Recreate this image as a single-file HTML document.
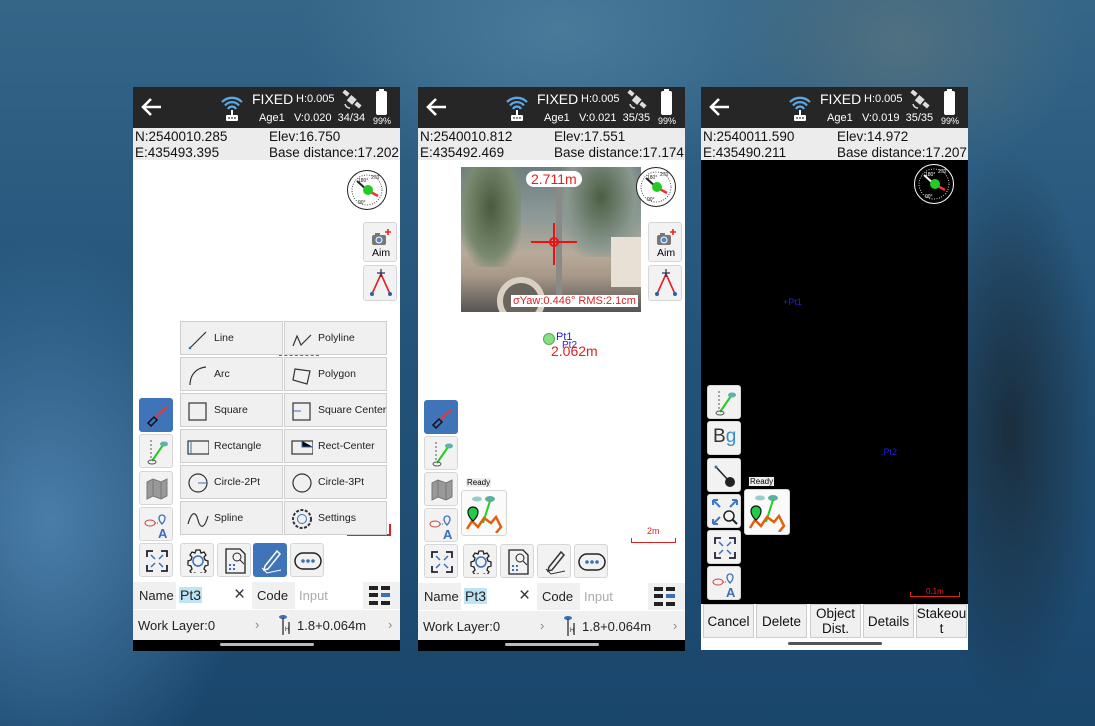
<!DOCTYPE html>
<html><head><meta charset="utf-8"><style>
*{box-sizing:border-box;margin:0;padding:0}
body{width:1095px;height:726px;overflow:hidden;position:relative;font-family:"Liberation Sans",sans-serif;
background:
radial-gradient(ellipse 200px 280px at 50px 520px,#4a7eaa 0%,rgba(60,110,150,0) 100%),
radial-gradient(ellipse 90px 280px at 1010px 430px,#1a2e3e 0%,rgba(30,50,70,0) 100%),
radial-gradient(ellipse 180px 140px at 900px 40px,#50707f 0%,rgba(80,110,130,0) 100%),
radial-gradient(ellipse 260px 160px at 560px 30px,#4a7a9a 0%,rgba(80,120,150,0) 100%),
linear-gradient(180deg,#356688 0%,#24547a 45%,#1a466c 100%);}
.a{position:absolute}
.ph{position:absolute;top:87px;width:267px;height:564px;background:#fff;overflow:hidden}
.hd{position:absolute;left:0;top:0;width:100%;height:41px;background:#262626;color:#fff}
.info{position:absolute;left:0;top:41px;width:100%;height:32px;background:#ececec;font-size:13.5px;color:#111;line-height:16px}
.btn{position:absolute;width:34px;height:34px;background:#f2f2f2;border:1px solid #d6d6d6;border-radius:3px}
.blue{background:#3f74b8;border-color:#3f74b8}
.cell{position:absolute;width:103px;height:34px;background:#f0f0f0;border:1px solid #cfcfcf;font-size:10.5px;color:#222;line-height:32px;padding-left:33px;white-space:nowrap}
.cell svg{position:absolute;left:6px;top:6px}
.bar{position:absolute;left:0;width:100%;font-size:13px;color:#222}
.nav{position:absolute;left:0;bottom:0;width:100%;height:11px;background:#000}
.nav i{position:absolute;left:87px;top:3px;width:94px;height:3px;background:#bbb;border-radius:2px}
.bb{position:absolute;top:517px;height:34px;width:51px;background:#f0f0f0;border:1px solid #ccc;font-size:13.5px;text-align:center;color:#111;display:flex;align-items:center;justify-content:center;line-height:15px}
</style></head><body>
<div id="root"></div>
<script>
function header(fx,age,v,sats){return `
<div class="hd">
<svg class="a" style="left:8px;top:10px" width="22" height="20" viewBox="0 0 22 20"><path d="M20 10H3M10 2L2 10l8 8" stroke="#fff" stroke-width="2.6" fill="none"/></svg>
<svg class="a" style="left:86px;top:6px" width="26" height="30" viewBox="0 0 26 30"><path d="M3 9a14 14 0 0 1 20 0M6 12.5a9 9 0 0 1 14 0M9 16a4.5 4.5 0 0 1 8 0" stroke="#5aa6e6" stroke-width="2.3" fill="none"/><rect x="12" y="17" width="2" height="6" fill="#fff"/><rect x="7" y="22" width="12" height="6" rx="1" fill="#fff"/><circle cx="10" cy="25" r="0.9" fill="#333"/><circle cx="13" cy="25" r="0.9" fill="#333"/><circle cx="16" cy="25" r="0.9" fill="#333"/></svg>
<div class="a" style="left:119px;top:4px;font-size:14px">FIXED</div>
<div class="a" style="left:163px;top:6px;font-size:11px">H:0.005</div>
<div class="a" style="left:126px;top:25px;font-size:11px">Age1</div>
<div class="a" style="left:161px;top:25px;font-size:11px">V:${v}&nbsp; ${sats}</div>
<svg class="a" style="left:208px;top:3px" width="22" height="20" viewBox="0 0 22 20"><g fill="#ddd"><rect x="7" y="6" width="7" height="7" transform="rotate(40 10 10)"/><rect x="2" y="1" width="6" height="4" transform="rotate(40 5 3)"/><rect x="14" y="13" width="6" height="4" transform="rotate(40 17 15)"/></g><path d="M4 14a5 5 0 0 0 5 4" stroke="#ddd" stroke-width="1.5" fill="none"/></svg>
<div class="a" style="left:243px;top:4px;width:11px;height:24px;background:#fff;border-radius:2px"></div>
<div class="a" style="left:246px;top:2px;width:5px;height:3px;background:#fff"></div>
<div class="a" style="left:240px;top:29px;font-size:9px">99%</div>
</div>`}
function info(n,el,e,bd){return `<div class="info"><div class="a" style="left:2px;top:1px">N:${n}</div><div class="a" style="left:136px;top:1px">Elev:${el}</div><div class="a" style="left:2px;top:17px">E:${e}</div><div class="a" style="left:136px;top:17px">Base distance:${bd}</div></div>`}
function compass(x,y,dark){const c=dark?'#fff':'#222';return `<svg class="a" style="left:${x}px;top:${y}px" width="42" height="42" viewBox="0 0 42 42"><circle cx="21" cy="21" r="19.5" fill="${dark?'#000':'#fff'}" stroke="${c}" stroke-width="1"/><circle cx="21" cy="21" r="15" fill="none" stroke="${c}" stroke-width="0.8" stroke-dasharray="1 1.5"/><path d="M11 12L21 21" stroke="${c}" stroke-width="2"/><path d="M21 21L32 27" stroke="#e33" stroke-width="2.5"/><circle cx="22" cy="21" r="5" fill="#2c2"/><text x="12" y="13" font-size="5" fill="${c}">180°</text><text x="25" y="10" font-size="5" fill="${c}">270</text><text x="12" y="35" font-size="5" fill="${c}">90°</text></svg>`}
function aim(x,y){return `<div class="btn" style="left:${x}px;top:${y}px;height:40px;width:34px"><svg class="a" style="left:6px;top:5px" width="22" height="18" viewBox="0 0 22 18"><rect x="2" y="7" width="14" height="10" rx="2" fill="#777"/><rect x="5" y="5" width="5" height="3" fill="#777"/><circle cx="9" cy="12" r="3" fill="#4a8ad0" stroke="#fff"/><path d="M18 1v6M15 4h6" stroke="#e22" stroke-width="1.6"/></svg><div class="a" style="left:8px;top:24px;font-size:10.5px">Aim</div></div>
<div class="btn" style="left:${x}px;top:${y+43}px;height:36px"><svg class="a" style="left:4px;top:2px" width="26" height="30" viewBox="0 0 26 30"><path d="M13 6L4 26M13 6l9 20" stroke="#d22" stroke-width="1.6"/><path d="M13 1v8M9 5h8" stroke="#235" stroke-width="1.2"/><circle cx="4" cy="26" r="2" fill="#2a5fa8"/><circle cx="22" cy="26" r="2" fill="#2a5fa8"/></svg></div>`}
const ic={
pen:`<svg class="a" style="left:4px;top:4px" width="26" height="26" viewBox="0 0 26 26"><path d="M12 14L23 4" stroke="#e33" stroke-width="2"/><path d="M4 20l6-6 3 3-6 6z" fill="none" stroke="#111" stroke-width="1.5"/></svg>`,
stake:`<svg class="a" style="left:6px;top:3px" width="24" height="28" viewBox="0 0 24 28"><path d="M5 2v20" stroke="#555" stroke-dasharray="2 2"/><path d="M6 23L17 7" stroke="#2c2" stroke-width="2"/><ellipse cx="18" cy="6" rx="4" ry="2.5" fill="#5fb0a8"/><ellipse cx="6" cy="24" rx="4" ry="2" fill="none" stroke="#555"/></svg>`,
map:`<svg class="a" style="left:5px;top:5px" width="24" height="24" viewBox="0 0 24 24"><path d="M2 5l6-3 8 3 6-3v17l-6 3-8-3-6 3z" fill="#999" stroke="#777"/><path d="M8 2v17M16 5v17" stroke="#777"/></svg>`,
eyeA:`<svg class="a" style="left:3px;top:3px" width="28" height="28" viewBox="0 0 28 28"><ellipse cx="7" cy="12" rx="5" ry="3" fill="none" stroke="#c44"/><path d="M12 12h4" stroke="#555" stroke-dasharray="1 1"/><path d="M19 4a3 3 0 0 1 3 3c0 3-3 6-3 6s-3-3-3-6a3 3 0 0 1 3-3z" fill="none" stroke="#3a6fb8" stroke-width="1.3"/><text x="15" y="27" font-size="13" font-weight="bold" fill="#3a6fb8" font-family="Liberation Sans">A</text></svg>`,
full:`<svg class="a" style="left:6px;top:6px" width="22" height="22" viewBox="0 0 22 22"><path d="M1 7V1h6M15 1h6v6M21 15v6h-6M7 21H1v-6" stroke="#223" stroke-width="1.8" fill="none"/><path d="M5 5l4 4M17 5l-4 4M5 17l4-4M17 17l-4-4" stroke="#3a6fb8" stroke-width="1.5"/></svg>`,
gear:`<svg class="a" style="left:5px;top:5px" width="24" height="24" viewBox="0 0 24 24"><path d="M10 1h4l1 3 3-1 2 3-2 2 1 3 3 1v4l-3 1-1 3 2 2-2 3-3-1-1 3h-4l-1-3-3 1-2-3 2-2-1-3-3-1v-4l3-1 1-3-2-2 2-3 3 1z" fill="none" stroke="#222" stroke-width="1.3"/><circle cx="12" cy="12" r="5" fill="none" stroke="#3a6fb8" stroke-width="1.5"/></svg>`,
doc:`<svg class="a" style="left:6px;top:4px" width="24" height="26" viewBox="0 0 24 26"><path d="M2 1h14l5 5v19H2z" fill="none" stroke="#222" stroke-width="1.3"/><circle cx="13" cy="9" r="4" fill="none" stroke="#222"/><path d="M16 12l4 4" stroke="#222"/><path d="M5 17h2M9 17h2M5 21h2M9 21h2" stroke="#3a6fb8" stroke-width="2"/></svg>`,
pencil:`<svg class="a" style="left:5px;top:4px" width="24" height="26" viewBox="0 0 24 26"><path d="M6 18L18 3l3 3L9 21l-4 1z" fill="none" stroke="#fff" stroke-width="1.5"/><path d="M3 20l5 5 14-3" stroke="#fff" fill="none"/></svg>`,
pencilD:`<svg class="a" style="left:5px;top:4px" width="24" height="26" viewBox="0 0 24 26"><path d="M6 18L18 3l3 3L9 21l-4 1z" fill="none" stroke="#333" stroke-width="1.5"/><path d="M3 20l5 5 14-3" stroke="#333" fill="none"/></svg>`,
more:`<svg class="a" style="left:3px;top:8px" width="28" height="18" viewBox="0 0 28 18"><rect x="1" y="1" width="26" height="16" rx="8" fill="none" stroke="#222" stroke-width="1.5"/><circle cx="9" cy="9" r="1.8" fill="#3a6fb8"/><circle cx="14" cy="9" r="1.8" fill="#3a6fb8"/><circle cx="19" cy="9" r="1.8" fill="#3a6fb8"/></svg>`,
bg:`<div class="a" style="left:5px;top:4px;font-size:19px;color:#333">B<span style="color:#3a8ad0">g</span></div>`,
pole:`<svg class="a" style="left:5px;top:5px" width="24" height="24" viewBox="0 0 24 24"><path d="M3 3l13 14" stroke="#222" stroke-width="1.5"/><circle cx="3" cy="3" r="1.5" fill="#3a6fb8"/><circle cx="17" cy="18" r="5" fill="#222"/></svg>`,
zoom:`<svg class="a" style="left:3px;top:3px" width="28" height="28" viewBox="0 0 28 28"><path d="M2 2l7 7M2 2h5M2 2v5M26 2l-7 7M26 2h-5M26 2v5M2 26l7-7M2 26h5M2 26v-5" stroke="#3a78c8" stroke-width="2" fill="none"/><circle cx="18" cy="18" r="5" fill="none" stroke="#222" stroke-width="1.5"/><path d="M21 21l5 5" stroke="#222" stroke-width="2"/></svg>`
};
function btn(x,y,icon,blue){return `<div class="btn${blue?' blue':''}" style="left:${x}px;top:${y}px">${ic[icon]}</div>`}
function ready(x,y){return `<div class="a" style="left:${x+5}px;top:${y-12}px;font-size:8px;background:#eee;padding:0 1px">Ready</div><div class="btn" style="left:${x}px;top:${y}px;width:46px;height:46px;background:#fafafa"><svg class="a" style="left:2px;top:2px" width="40" height="40" viewBox="0 0 40 40"><ellipse cx="13" cy="6" rx="5" ry="2.5" fill="#9cc"/><ellipse cx="26" cy="6" rx="5" ry="3" fill="#5ab0a0"/><path d="M26 8L19 30" stroke="#2c2" stroke-width="2"/><path d="M3 36l5-8 6 6 6-9 7 5 5-6 5 10-5 6" stroke="#e06010" stroke-width="2.5" fill="none"/><path d="M9 14a5 5 0 0 1 5 5c0 5-5 9-5 9s-5-4-5-9a5 5 0 0 1 5-5z" fill="#2c4" stroke="#111" stroke-width="1.2"/></svg></div>`}
function bottom(y){return `
<div class="bar" style="top:${y}px;height:27px;background:#f0f0f0"><div class="a" style="left:6px;top:6px">Name</div><div class="a" style="left:43px;top:0;width:76px;height:27px;background:#fff"></div><div class="a" style="left:46px;top:5px;background:#bfe4f5;font-size:14px;padding:0 1px">Pt3</div><div class="a" style="left:101px;top:2px;font-size:19px;color:#333">×</div><div class="a" style="left:124px;top:6px">Code</div><div class="a" style="left:162px;top:0;width:68px;height:27px;background:#fff"></div><div class="a" style="left:166px;top:6px;color:#aaa">Input</div>
<svg class="a" style="left:236px;top:4px" width="22" height="20" viewBox="0 0 22 20"><g fill="#222"><rect x="0" y="0" width="9" height="4"/><rect x="12" y="0" width="9" height="4"/><rect x="0" y="7" width="9" height="4"/><rect x="12" y="7" width="9" height="4" fill="#3a6fb8"/><rect x="0" y="15" width="9" height="4"/><rect x="12" y="15" width="9" height="4"/></g></svg></div>
<div class="bar" style="top:${y+28}px;height:30px;background:#f0f0f0"><div class="a" style="left:5px;top:8px">Work Layer:0</div><div class="a" style="left:122px;top:7px;color:#888">›</div>
<svg class="a" style="left:145px;top:4px" width="14" height="22" viewBox="0 0 14 22"><ellipse cx="5" cy="3" rx="4" ry="2" fill="#3a6fb8"/><path d="M5 4v17M11 8v12" stroke="#222" stroke-width="1.2"/><text x="7" y="17" font-size="6" fill="#222">H</text></svg>
<div class="a" style="left:164px;top:8px">1.8+0.064m</div><div class="a" style="left:255px;top:7px;color:#888">›</div></div>`}
const cells=[["Line",'<path d="M3 20L19 4" stroke="#333" stroke-width="1.2"/><circle cx="3" cy="20" r="1.3" fill="#3a6fb8"/>'],["Polyline",'<path d="M2 18l4-10 4 9 10-10" stroke="#333" fill="none" stroke-width="1.2"/>'],
["Arc",'<path d="M3 21C3 11 9 4 19 3" stroke="#333" fill="none" stroke-width="1.2"/>'],["Polygon",'<path d="M4 5l15 2-3 13-14-4z" stroke="#333" fill="none" stroke-width="1.2"/>'],
["Square",'<rect x="2" y="3" width="17" height="17" stroke="#333" fill="none" stroke-width="1.2"/>'],["Square Center",'<rect x="2" y="3" width="17" height="17" stroke="#333" fill="none" stroke-width="1.2"/><path d="M2 11h8" stroke="#3a6fb8"/>'],
["Rectangle",'<rect x="1" y="5" width="21" height="13" stroke="#333" fill="none" stroke-width="1.2"/><path d="M4 5v13" stroke="#3a6fb8"/>'],["Rect-Center",'<rect x="1" y="5" width="21" height="13" stroke="#333" fill="none" stroke-width="1.2"/><path d="M11 5v6h11" stroke="#3a6fb8"/>'],
["Circle-2Pt",'<circle cx="11" cy="11" r="9" stroke="#333" fill="none" stroke-width="1.2"/><path d="M11 11h9" stroke="#3a6fb8"/>'],["Circle-3Pt",'<circle cx="11" cy="11" r="9" stroke="#333" fill="none" stroke-width="1.2"/>'],
["Spline",'<path d="M1 16C5 2 9 4 11 12s6 10 10-4" stroke="#333" fill="none" stroke-width="1.2"/>'],["Settings",'<circle cx="11" cy="11" r="9" stroke="#333" fill="none" stroke-dasharray="3 1.5" stroke-width="2"/><circle cx="11" cy="11" r="4.5" stroke="#3a6fb8" fill="none"/>']];
let menu='';cells.forEach((c,i)=>{const x=47+(i%2)*104,y=234+Math.floor(i/2)*36;menu+=`<div class="cell" style="left:${x}px;top:${y}px"><svg width="22" height="22" viewBox="0 0 22 22">${c[1]}</svg>${c[0]}</div>`});

let h='';
h+=`<div class="ph" style="left:133px">${header(1,1,'0.020','34/34')}${info('2540010.285','16.750','435493.395','17.202')}
${compass(213,82)}${aim(230,135)}
<div class="a" style="left:146px;top:268px;width:40px;height:2px;border-top:1px dashed #e33"></div>
<div class="a" style="left:214px;top:437px;width:44px;height:12px;border:2px solid #d22;border-top:none"></div>
${menu}
${btn(6,311,'pen',1)}${btn(6,347,'stake')}${btn(6,384,'map')}${btn(6,420,'eyeA')}${btn(6,456,'full')}
${btn(47,456,'gear')}${btn(84,456,'doc')}${btn(120,456,'pencil',1)}${btn(157,456,'more')}
${bottom(495)}<div class="nav"><i></i></div></div>`;
h+=`<div class="ph" style="left:418px">${header(1,1,'0.021','35/35')}${info('2540010.812','17.551','435492.469','17.174')}
<div class="a" style="left:43px;top:80px;width:180px;height:145px;overflow:hidden;background:linear-gradient(180deg,#6d7f80 0%,#8d9a98 35%,#b8aa98 60%,#a89888 75%,#555 100%)">
<div class="a" style="left:0;top:0;width:60px;height:100px;background:radial-gradient(ellipse at 30px 40px,#4a5a3c,#7a8a70 60%,transparent 80%)"></div>
<div class="a" style="left:100px;top:0;width:80px;height:90px;background:radial-gradient(ellipse at 40px 30px,#4d5e44,#8a9890 60%,transparent 80%)"></div>
<div class="a" style="left:36px;top:110px;width:48px;height:48px;border-radius:50%;border:6px solid #d8d0c0;background:#6a655e"></div>
<div class="a" style="left:150px;top:70px;width:40px;height:50px;background:#e8e0d4"></div>
<div class="a" style="left:95px;top:20px;width:6px;height:120px;background:#8a8a88"></div>
<div class="a" style="left:65px;top:4px;background:#fff;color:#d22;font-size:14px;border-radius:9px;padding:0 5px">2.711m</div>
<svg class="a" style="left:70px;top:52px" width="46" height="46" viewBox="0 0 46 46"><path d="M0 23h46M23 4v42" stroke="#e11" stroke-width="2"/><circle cx="23" cy="23" r="4" fill="none" stroke="#e11" stroke-width="2"/></svg>
<div class="a" style="left:50px;top:128px;background:#fff;color:#d22;font-size:11px;padding:0 2px">σYaw:0.446° RMS:2.1cm</div></div>
${compass(217,79)}${aim(230,135)}
<div class="a" style="left:125px;top:246px;width:12px;height:12px;border-radius:50%;background:#8d8;border:1px solid #5a5"></div>
<div class="a" style="left:138px;top:244px;font-size:11px;color:#22c">Pt1</div>
<div class="a" style="left:144px;top:253px;font-size:10px;color:#22c">Pt2</div>
<div class="a" style="left:133px;top:256px;font-size:14px;color:#d22">2.062m</div>
<div class="a" style="left:213px;top:451px;width:45px;height:5px;border:1px solid #d22;border-top:none"></div>
<div class="a" style="left:229px;top:439px;font-size:9px;color:#d22">2m</div>
${ready(43,403)}
${btn(6,313,'pen',1)}${btn(6,349,'stake')}${btn(6,385,'map')}${btn(6,421,'eyeA')}${btn(6,457,'full')}
${btn(45,457,'gear')}${btn(82,457,'doc')}${btn(119,457,'pencilD')}${btn(156,457,'more')}
${bottom(496)}<div class="nav"><i></i></div></div>`;
h+=`<div class="ph" style="left:701px;height:563px">${header(1,1,'0.019','35/35')}${info('2540011.590','14.972','435490.211','17.207')}
<div class="a" style="left:0;top:73px;width:267px;height:444px;background:#000"></div>
${compass(212,76,1)}
<div class="a" style="left:82px;top:210px;font-size:9px;color:#22c">+Pt1</div>
<div class="a" style="left:180px;top:360px;font-size:9px;color:#22c">.Pt2</div>
<div class="a" style="left:209px;top:505px;width:50px;height:5px;border:1px solid #d22;border-top:none"></div>
<div class="a" style="left:225px;top:500px;font-size:8px;color:#d22">0.1m</div>
${btn(6,298,'stake')}${btn(6,334,'bg')}${btn(6,371,'pole')}${btn(6,407,'zoom')}${btn(6,443,'full')}${btn(6,479,'eyeA')}
${ready(43,402)}
<div class="bb" style="left:2px">Cancel</div><div class="bb" style="left:55px">Delete</div><div class="bb" style="left:109px">Object<br>Dist.</div><div class="bb" style="left:162px">Details</div><div class="bb" style="left:215px">Stakeou<br>t</div>
<div class="a" style="left:87px;top:555px;width:94px;height:3px;background:#555;border-radius:2px"></div></div>`;
document.getElementById('root').innerHTML=h;
</script>
</body></html>
